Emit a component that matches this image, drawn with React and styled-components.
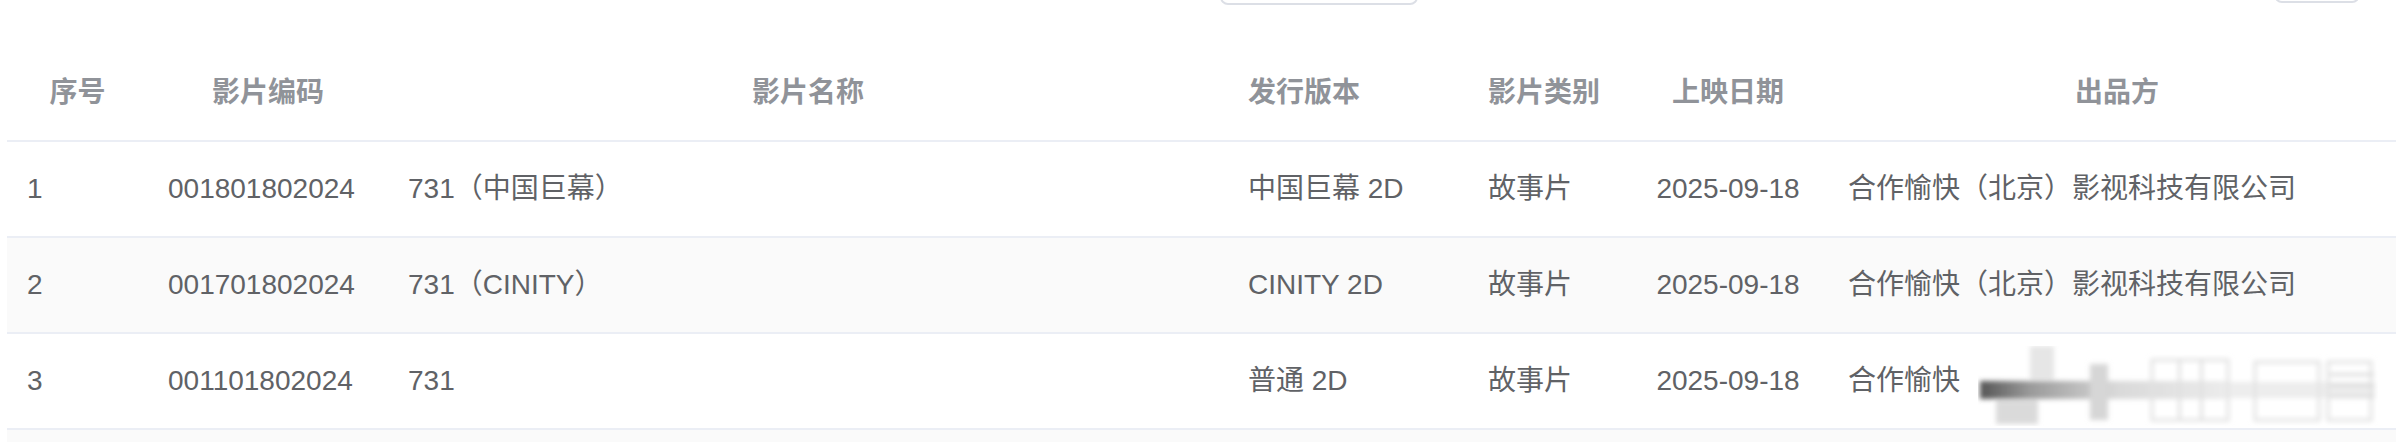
import styled, { createGlobalStyle } from "styled-components";

const GlobalStyle = createGlobalStyle`
  html, body {
    margin: 0;
    padding: 0;
    background: #fff;
  }
  body {
    font-family: "Liberation Sans", "Noto Sans CJK SC", sans-serif;
    overflow: hidden;
  }
`;

const Page = styled.div`
  width: 2396px;
  height: 442px;
  padding-left: 7px;
  box-sizing: border-box;
  overflow: hidden;
`;

// 상단 검색 폼 (아래쪽 테두리만 보임)
const FilterBar = styled.div`
  display: flex;
  align-items: flex-end;
  height: 5px;
  margin-bottom: 41px;
  overflow: hidden;
`;

const FieldBox = styled.div`
  flex: none;
  width: ${(p) => p.$w}px;
  height: 40px;
  margin-left: ${(p) => p.$ml}px;
  margin-bottom: ${(p) => p.$mb || 0}px;
  border: 2px solid #dcdfe6;
  border-radius: 8px;
  box-sizing: border-box;
`;

const Table = styled.table`
  width: 2399px;
  table-layout: fixed;
  border-collapse: separate;
  border-spacing: 0;
  font-size: 28px;
  line-height: 46px;
`;

const HeadCell = styled.th`
  padding: 24px 20px;
  border-bottom: 2px solid #ebeef5;
  color: #909399;
  font-weight: 700;
  text-align: ${(p) => p.$align || "left"};
  white-space: nowrap;
  overflow: hidden;
`;

const Row = styled.tr`
  background: ${(p) => (p.$striped ? "#fafafa" : "#fff")};
`;

const Cell = styled.td`
  position: relative;
  padding: 24px 20px;
  border-bottom: 2px solid #ebeef5;
  color: #606266;
  text-align: ${(p) => p.$align || "left"};
  white-space: nowrap;
  overflow: hidden;
`;

const Smudge = styled.svg`
  position: absolute;
  left: 150px;
  top: 12px;
  width: 400px;
  height: 80px;
  pointer-events: none;
`;

const columns = [
  { key: "no", title: "序号", width: 141, head: "center" },
  { key: "code", title: "影片编码", width: 240, head: "center" },
  { key: "name", title: "影片名称", width: 840, head: "center" },
  { key: "version", title: "发行版本", width: 240, head: "left" },
  { key: "type", title: "影片类别", width: 160, head: "left" },
  { key: "date", title: "上映日期", width: 200, head: "center", body: "center" },
  { key: "maker", title: "出品方", width: 578, head: "center" },
];

const rows = [
  {
    no: "1",
    code: "001801802024",
    name: "731（中国巨幕）",
    version: "中国巨幕 2D",
    type: "故事片",
    date: "2025-09-18",
    maker: "合作愉快（北京）影视科技有限公司",
  },
  {
    no: "2",
    code: "001701802024",
    name: "731（CINITY）",
    version: "CINITY 2D",
    type: "故事片",
    date: "2025-09-18",
    maker: "合作愉快（北京）影视科技有限公司",
  },
  {
    no: "3",
    code: "001101802024",
    name: "731",
    version: "普通 2D",
    type: "故事片",
    date: "2025-09-18",
    maker: "合作愉快",
    smudged: true,
  },
];

function SmudgeMark() {
  return (
    <Smudge viewBox="0 0 400 80">
      <defs>
        <filter id="smear" x="-10%" y="-30%" width="120%" height="160%">
          <feGaussianBlur stdDeviation="2.8" />
        </filter>
        <linearGradient id="smearBar" x1="0" x2="1" y1="0" y2="0">
          <stop offset="0" stopColor="#555" />
          <stop offset="0.2" stopColor="#9a9a9a" />
          <stop offset="0.55" stopColor="#d9d9d9" />
          <stop offset="1" stopColor="#ececec" />
        </linearGradient>
      </defs>
      <g filter="url(#smear)">
        <rect x="2" y="36" width="395" height="16" fill="#ededed" />
        <rect x="2" y="35" width="250" height="18" fill="url(#smearBar)" />
        <rect x="18" y="54" width="42" height="24" fill="#dadada" />
        <rect x="52" y="0" width="24" height="34" fill="#e6e6e6" />
        <rect x="112" y="18" width="18" height="56" fill="#d6d6d6" />
        <rect x="174" y="14" width="76" height="60" fill="none" stroke="#e2e2e2" strokeWidth="3" />
        <rect x="200" y="14" width="3" height="60" fill="#e0e0e0" />
        <rect x="222" y="14" width="3" height="60" fill="#e0e0e0" />
        <rect x="277" y="16" width="64" height="58" fill="none" stroke="#e2e2e2" strokeWidth="3" />
        <rect x="350" y="16" width="43" height="58" fill="none" stroke="#e2e2e2" strokeWidth="3" />
        <rect x="352" y="27" width="44" height="3" fill="#dadada" />
        <rect x="352" y="38" width="44" height="3" fill="#dadada" />
        <rect x="352" y="49" width="44" height="3" fill="#dadada" />
      </g>
    </Smudge>
  );
}

export default function App() {
  return (
    <Page>
      <GlobalStyle />
      <FilterBar>
        <FieldBox $w={198} $ml={1213} />
        <FieldBox $w={86} $ml={856} $mb={2} />
      </FilterBar>
      <Table>
        <colgroup>
          {columns.map((c) => (
            <col key={c.key} style={{ width: c.width }} />
          ))}
        </colgroup>
        <thead>
          <tr>
            {columns.map((c) => (
              <HeadCell key={c.key} $align={c.head}>
                {c.title}
              </HeadCell>
            ))}
          </tr>
        </thead>
        <tbody>
          {rows.map((r, i) => (
            <Row key={r.no} $striped={i % 2 === 1}>
              {columns.map((c) => (
                <Cell key={c.key} $align={c.body}>
                  {r[c.key]}
                  {c.key === "maker" && r.smudged && <SmudgeMark />}
                </Cell>
              ))}
            </Row>
          ))}
          <Row $striped>
            {columns.map((c) => (
              <Cell key={c.key}>&nbsp;</Cell>
            ))}
          </Row>
        </tbody>
      </Table>
    </Page>
  );
}
